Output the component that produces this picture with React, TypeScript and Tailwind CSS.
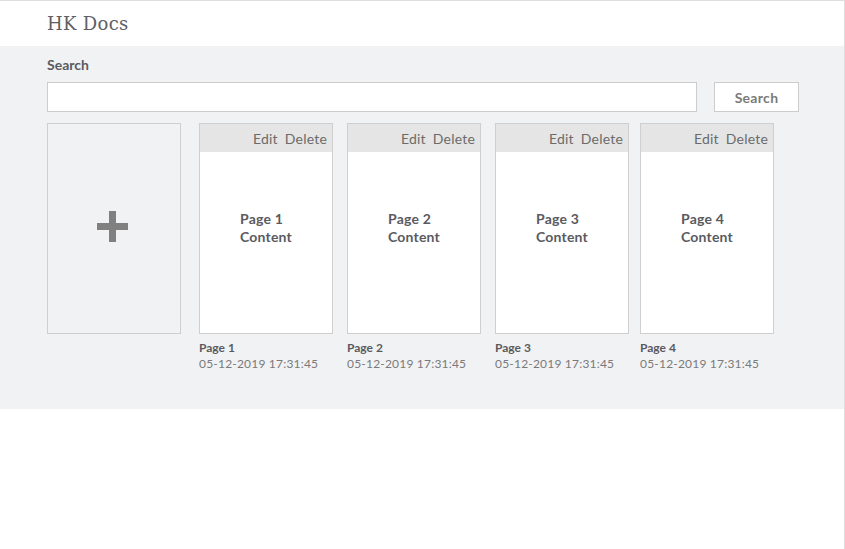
import React from 'react';

interface PageDoc {
  id: number;
  title: string;
  updatedAt: string;
  gap: string;
}

const pages: PageDoc[] = [
  { id: 1, title: 'Page 1', updatedAt: '05-12-2019 17:31:45', gap: 'ml-[18px]' },
  { id: 2, title: 'Page 2', updatedAt: '05-12-2019 17:31:45', gap: 'ml-[14px]' },
  { id: 3, title: 'Page 3', updatedAt: '05-12-2019 17:31:45', gap: 'ml-[14px]' },
  { id: 4, title: 'Page 4', updatedAt: '05-12-2019 17:31:45', gap: 'ml-[11px]' },
];

const PageCard: React.FC<{ page: PageDoc }> = ({ page }) => (
  <div className={`${page.gap} w-[134px] shrink-0 flex flex-col`}>
    <div className="h-[211px] border border-[#cfcfcf] bg-white flex flex-col">
      {/* Card actions */}
      <div className="h-[28px] bg-[#e5e5e5] flex items-center justify-end gap-[7px] pr-[5px] text-[14px] tracking-[0.2px] text-[#6b6b6b]">
        <span>Edit</span>
        <span>Delete</span>
      </div>
      <div className="flex-1 flex justify-center pt-[58px]">
        <div className="text-[14px] leading-[18px] font-bold tracking-[0.2px] text-[#5a5a5f]">
          <div>{page.title}</div>
          <div>Content</div>
        </div>
      </div>
    </div>
    <div className="mt-[6px] text-[12px] leading-[16px] font-bold text-[#5a5a5f]">{page.title}</div>
    <div className="text-[12px] leading-[16px] tracking-[0.2px] text-[#7a7a7a]">{page.updatedAt}</div>
  </div>
);

export default function App() {
  return (
    <div className="w-[845px] h-[549px] bg-white font-['Lato','Open_Sans',sans-serif]">
      <div className="w-[845px] border-t border-r border-[#dedede] h-[549px]">
        {/* Header */}
        <div className="h-[45px] flex items-center px-[47px]">
          <h1 className="font-['DejaVu_Serif','Liberation_Serif',serif] text-[18px] text-[#5f6066] tracking-[0.3px]">
            HK Docs
          </h1>
        </div>

        {/* Main area */}
        <div className="bg-[#f1f2f4] pl-[47px] pr-[40px] pt-[10px] pb-[37px]">
          <label className="block text-[14px] font-bold text-[#5a5a5f] leading-[18px]">Search</label>
          <div className="flex mt-[8px]">
            <input
              className="w-[650px] shrink-0 h-[30px] bg-white border border-[#cccccc] outline-none px-2"
              type="text"
            />
            <button className="ml-[17px] shrink-0 w-[85px] h-[30px] bg-white border border-[#cccccc] text-[14px] font-bold tracking-[0.3px] text-[#7a7a7a]">
              Search
            </button>
          </div>

          <div className="flex mt-[11px]">
            {/* New page */}
            <div className="w-[134px] shrink-0 h-[211px] border border-[#cfcfcf] flex items-center justify-center">
              <svg width="31" height="31" viewBox="0 0 31 31" className="-mt-[5px] -ml-[3px]">
                <rect x="12" y="0" width="7" height="31" fill="#808080" />
                <rect x="0" y="12" width="31" height="7" fill="#808080" />
              </svg>
            </div>
            {pages.map((p) => (
              <PageCard key={p.id} page={p} />
            ))}
          </div>
        </div>
      </div>
    </div>
  );
}
